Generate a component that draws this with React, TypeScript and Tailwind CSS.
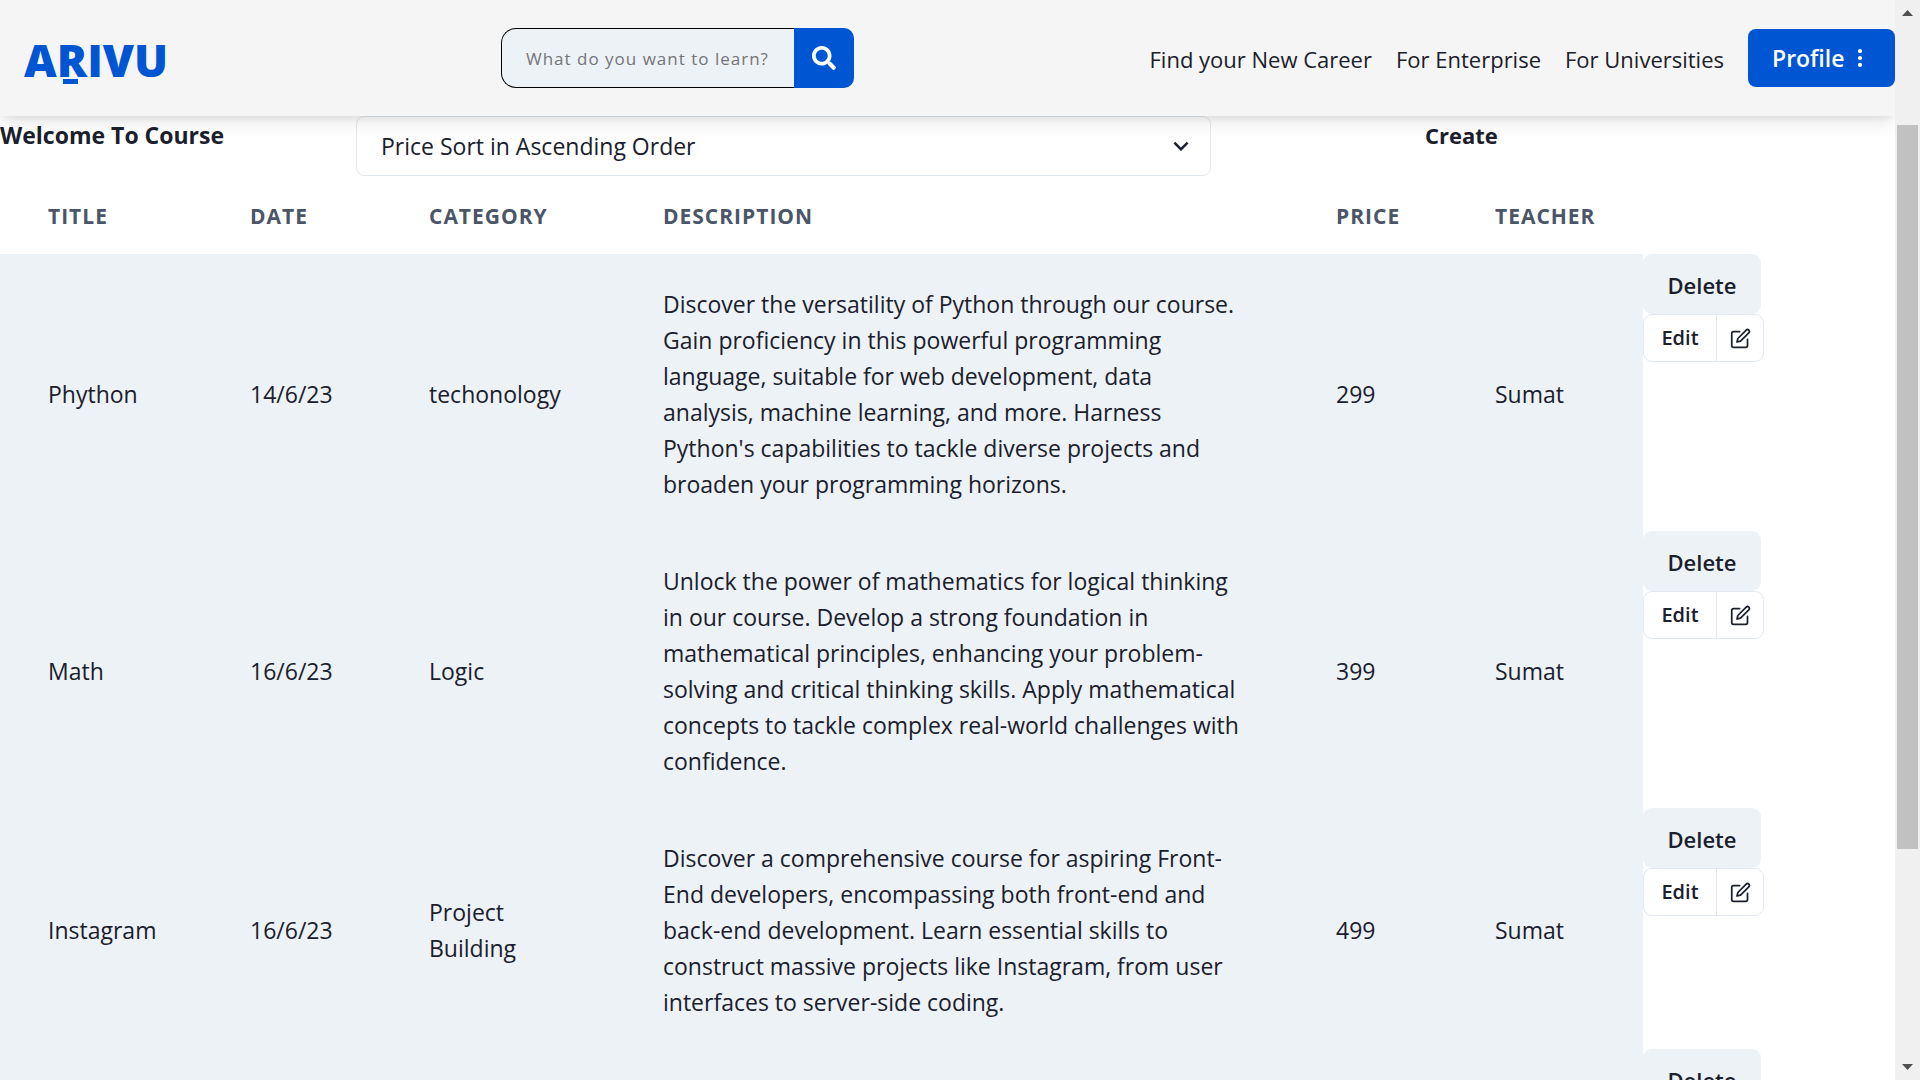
import React from "react";
import { FaSearch } from "react-icons/fa";
import { FiEdit } from "react-icons/fi";
import { BsThreeDotsVertical } from "react-icons/bs";
import { MdExpandMore } from "react-icons/md";

type Course = {
  title: string;
  date: string;
  category: string;
  description: string;
  price: number;
  teacher: string;
};

const courses: Course[] = [
  {
    title: "Phython",
    date: "14/6/23",
    category: "techonology",
    description:
      "Discover the versatility of Python through our course. Gain proficiency in this powerful programming language, suitable for web development, data analysis, machine learning, and more. Harness Python's capabilities to tackle diverse projects and broaden your programming horizons.",
    price: 299,
    teacher: "Sumat",
  },
  {
    title: "Math",
    date: "16/6/23",
    category: "Logic",
    description:
      "Unlock the power of mathematics for logical thinking in our course. Develop a strong foundation in mathematical principles, enhancing your problem-solving and critical thinking skills. Apply mathematical concepts to tackle complex real-world challenges with confidence.",
    price: 399,
    teacher: "Sumat",
  },
  {
    title: "Instagram",
    date: "16/6/23",
    category: "Project Building",
    description:
      "Discover a comprehensive course for aspiring Front-End developers, encompassing both front-end and back-end development. Learn essential skills to construct massive projects like Instagram, from user interfaces to server-side coding.",
    price: 499,
    teacher: "Sumat",
  },
];

function Header() {
  return (
    <header className="relative z-10 flex h-29 shrink-0 items-center bg-[#f5f5f5] shadow-[0_10px_15px_-3px_rgba(0,0,0,0.1),0_4px_6px_-2px_rgba(0,0,0,0.05)]">
      <a href="#" aria-label="Arivu" className="w-[501px] pt-0.5 pl-6 text-[45px] leading-none font-extrabold text-[#0056d2]">
        A
        <span className="relative inline-block">
          R
          <span className="absolute -bottom-0.5 left-1.5 h-[5px] w-[15px] bg-[#0056d2]" />
        </span>
        IVU
      </a>
      <form className="flex h-15 w-[353px]">
        <input
          type="text"
          aria-label="Search courses"
          placeholder="What do you want to learn?"
          className="min-w-0 flex-1 rounded-l-[15px] border border-r-0 border-black bg-[#edf2f7] px-6 pt-0.5 text-[17px] tracking-[1px] placeholder:text-[#757575]"
        />
        <button type="button" aria-label="Search" className="flex w-15 items-center justify-center rounded-r-[10px] bg-[#0056d2] text-white">
          <FaSearch size={24} />
        </button>
      </form>
      <nav className="ml-auto flex items-center gap-6 text-[22px]">
        <a href="#" className="pt-0.5">Find your New Career</a>
        <a href="#" className="pt-0.5">For Enterprise</a>
        <a href="#" className="pt-0.5">For Universities</a>
        <button type="button" className="flex h-[58px] w-[147px] items-center gap-1 rounded-lg bg-[#0056d2] pl-6 text-[23px] font-semibold text-white">
          Profile
          <BsThreeDotsVertical size={22} />
        </button>
      </nav>
    </header>
  );
}

function Toolbar() {
  return (
    <div className="grid grid-cols-[356fr_855fr_214fr_470fr]">
      <h2 className="text-[23px] leading-[38px] font-bold">Welcome To Course</h2>
      <div className="relative">
        <select aria-label="Sort courses" className="h-15 w-full appearance-none rounded-lg border border-[#e2e8f0] bg-white px-6 text-[23px]">
          <option>Price Sort in Ascending Order</option>
          <option>Price Sort in Descending Order</option>
        </select>
        <MdExpandMore size={30} className="pointer-events-none absolute top-[15px] right-[15px]" />
      </div>
      <a href="#" className="col-start-4 text-[22px] leading-[38px] font-bold">
        Create
      </a>
    </div>
  );
}

function Actions() {
  return (
    <td className="p-0 align-top font-semibold">
      <button type="button" className="block h-15 w-[118px] rounded-[9px] bg-[#edf2f7] pt-0.5 text-[22px]">
        Delete
      </button>
      <div className="flex h-12 w-[121px] rounded-[9px] border border-[#e2e8f0]">
        <button type="button" className="flex-1 border-r border-[#e2e8f0] text-[20px]">
          Edit
        </button>
        <button type="button" aria-label="Edit course" className="flex w-[46px] items-center justify-center">
          <FiEdit size={21} />
        </button>
      </div>
    </td>
  );
}

const cell = "border-b border-[#edf2f7] bg-[#edf2f7] px-12 pt-8 pb-7";
const head = "h-[78px] px-12 pt-0.5";

function CourseTable() {
  return (
    <table className="w-full table-fixed border-separate border-spacing-0 text-left">
      <thead className="text-[21px] leading-[30px] tracking-[1px] text-[#4a5568]">
        <tr>
          <th className={`${head} w-[202px]`}>TITLE</th>
          <th className={`${head} w-[179px]`}>DATE</th>
          <th className={`${head} w-[234px]`}>CATEGORY</th>
          <th className={head}>DESCRIPTION</th>
          <th className={`${head} w-[159px]`}>PRICE</th>
          <th className={`${head} w-[196px]`}>TEACHER</th>
          <td className="w-[252px]" />
        </tr>
      </thead>
      <tbody className="text-[23px] leading-9">
        {courses.map((c) => (
          <tr key={c.title}>
            <td className={cell}>{c.title}</td>
            <td className={cell}>{c.date}</td>
            <td className={cell}>{c.category}</td>
            <td className={cell}>{c.description}</td>
            <td className={cell}>{c.price}</td>
            <td className={cell}>{c.teacher}</td>
            <Actions />
          </tr>
        ))}
        <tr>
          <td colSpan={6} className={cell} />
          <Actions />
        </tr>
      </tbody>
    </table>
  );
}

function Scrollbar() {
  return (
    <div aria-hidden="true" className="flex w-[25px] shrink-0 flex-col items-center justify-between bg-[#f0f0f0] text-[#505050]">
      <svg width="25" height="25" viewBox="0 0 25 25" fill="currentColor">
        <path d="M7 16h11l-5.500-6z" />
      </svg>
      <div className="flex w-[21px] flex-1 flex-col">
        <div className="flex-[100]" />
        <div className="flex-[724] bg-[#c1c1c1]" />
        <div className="flex-[206]" />
      </div>
      <svg width="25" height="25" viewBox="0 0 25 25" fill="currentColor">
        <path d="M7 9h11l-5.500 6z" />
      </svg>
    </div>
  );
}

export default function App() {
  return (
    <div className="flex h-screen overflow-hidden bg-white font-['Open_Sans','Noto_Sans',sans-serif] text-[#1a202c]">
      <div className="flex min-w-0 flex-1 flex-col overflow-hidden">
        <Header />
        <main className="min-h-0 flex-1 overflow-hidden">
          <Toolbar />
          <CourseTable />
        </main>
      </div>
      <Scrollbar />
    </div>
  );
}
